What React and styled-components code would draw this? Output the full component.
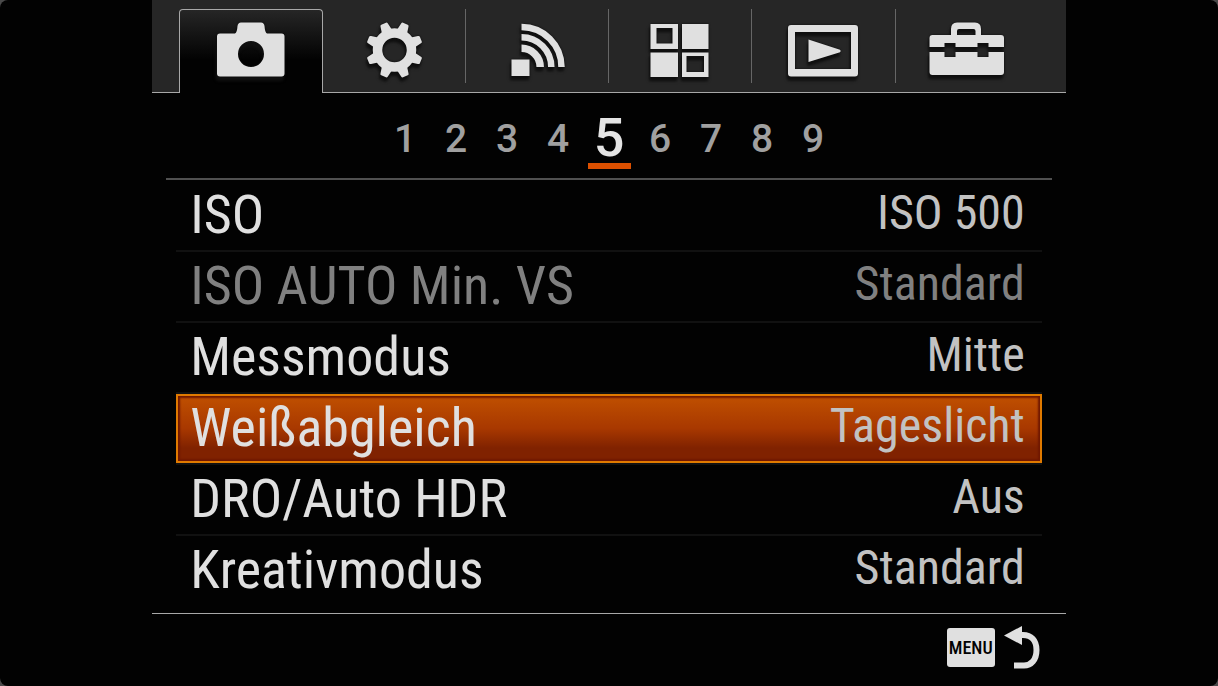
import React, { useState } from "react";
import styled, { createGlobalStyle, css } from "styled-components";

const GlobalStyle = createGlobalStyle`
  * {
    box-sizing: border-box;
  }
  body {
    margin: 0;
    background-color: #4a4a4a;
  }
  button {
    margin: 0;
    padding: 0;
    border: 0;
    background: none;
    color: inherit;
    font: inherit;
    cursor: pointer;
  }
`;

const Screen = styled.main`
  min-height: 100vh;
  background-color: #020202;
  border-radius: 8px;
  font-family: "Roboto Condensed", "Liberation Sans", sans-serif;
  color: #e0e0e0;
`;

const Menu = styled.div`
  width: 75%;
  margin: 0 auto;
`;

const TabBar = styled.nav`
  display: grid;
  grid-template-columns: repeat(6, 1fr);
  padding: 9px 27px 0;
  background-color: #262626;
  border-bottom: 1px solid #a8a8a8;
`;

const Tab = styled.button`
  display: flex;
  align-items: center;
  justify-content: center;
  height: 74px;
  border-right: 1px solid #666;
  &:last-child {
    border-right: 0;
    padding-right: 2px;
  }
  ${(props) =>
    props.$active &&
    css`
      height: 84px;
      margin-bottom: -1px;
      padding-bottom: 12px;
      border: 1px solid #a8a8a8;
      border-bottom: 0;
      border-radius: 4px 4px 0 0;
      background: linear-gradient(#262626, #020202 60%);
    `}
`;

const TabIcon = styled.svg`
  width: 80px;
  height: 60px;
  margin-top: 10px;
  overflow: visible;
  filter: drop-shadow(0 0 1px #0c0c0c) drop-shadow(-1px 4px 1px #101010);
`;

const Pages = styled.nav`
  display: flex;
  justify-content: center;
  height: 87px;
  margin: 0 14px;
  padding-top: 20px;
  border-bottom: 2px solid #505050;
  font-family: Roboto, "Liberation Sans", sans-serif;
  font-weight: 500;
`;

const Page = styled.button`
  width: 43px;
  height: 56px;
  margin: 0 4px;
  padding-bottom: 4px;
  font-size: 39px;
  line-height: 48px;
  color: #a0a0a0;
  ${(props) =>
    props.$active &&
    css`
      padding-bottom: 0;
      color: #e4e4e4;
      font-size: 54px;
      border-bottom: 6px solid #dc5000;
    `}
`;

const List = styled.ul`
  list-style: none;
  margin: 0 24px;
  padding: 1px 0 8px;
`;

const Item = styled.li`
  border-bottom: 2px solid #111;
  &:last-child {
    border-bottom: 0;
  }
`;

const Row = styled.button`
  display: flex;
  justify-content: space-between;
  width: 100%;
  height: 69px;
  padding: 0 15px 0 12px;
  border: 2px solid transparent;
  color: ${(props) => (props.disabled ? "#808080" : "#e0e0e0")};
  ${(props) =>
    props.$selected &&
    css`
      border-color: #e07a00;
      background: linear-gradient(#c05000, #a83800 50%, #802200 80%);
      box-shadow: inset 0 0 2px 2px #701800;
    `}
`;

const Label = styled.span`
  font-size: 54px;
  line-height: 64px;
`;

const Value = styled.span`
  font-size: 48px;
  line-height: 60px;
  color: ${(props) => (props.$dim ? "#808080" : "#c2c2c2")};
`;

const Footer = styled.footer`
  display: flex;
  justify-content: flex-end;
  padding: 12px 26px 16px;
  border-top: 1px solid #a8a8a8;
`;

const Back = styled.button`
  display: flex;
  align-items: center;
  gap: 9px;
`;

const MenuKey = styled.span`
  width: 48px;
  height: 39px;
  border-radius: 3px;
  background-color: #e0e0e0;
  color: #020202;
  font-size: 18px;
  font-weight: 500;
  line-height: 40px;
  text-align: center;
`;

const tabs = [
  {
    name: "Kamera",
    icon: (
      <path
        fillRule="evenodd"
        d="M9 12.500H24Q26 12 26.500 5Q27 1.500 30 1.500H50Q53 1.500 53.500 5Q54 12 56 12.500H70.500Q73.500 12.500 73.500 15.500V52.500Q73.500 55.500 70.500 55.500H9Q6 55.500 6 52.500V15.500Q6 12.500 9 12.500ZM40 20A13 13 0 1 0 40 46A13 13 0 1 0 40 20Z"
      />
    ),
  },
  {
    name: "Benutzereinstellungen",
    icon: (
      <g transform="translate(40.5 29)">
        <circle r="17" fill="none" stroke="#e0e0e0" strokeWidth="9.500" />
        {[0, 1, 2, 3, 4, 5, 6, 7].map((n) => (
          <path
            key={n}
            transform={`rotate(${22.5 + n * 45})`}
            d="M-5.500 -19L-4 -27Q-3.800 -28.500 -2.500 -28.500H2.500Q3.800 -28.500 4 -27L5.500 -19Z"
          />
        ))}
      </g>
    ),
  },
  {
    name: "Drahtlos",
    icon: (
      <g>
        <rect x="14.500" y="38.500" width="18" height="16.500" />
        <g fill="none" stroke="#e0e0e0">
          <path strokeWidth="7.500" d="M24.500 27.300A18.700 18.700 0 0 1 43.200 46" />
          <path strokeWidth="6.500" d="M24.500 16.200A29.800 29.800 0 0 1 54.300 46" />
          <path strokeWidth="6.500" d="M24.500 6A40 40 0 0 1 64.500 46" />
        </g>
      </g>
    ),
  },
  {
    name: "Applikation",
    icon: (
      <path
        fillRule="evenodd"
        d="M10.500 3H38V28H10.500ZM16.500 7V22.500H32.500V7ZM42 3H68.500V28H42ZM10.500 31.500H38V56H10.500ZM42 31.500H68.500V56H42ZM46.500 35V51H64V35Z"
      />
    ),
  },
  {
    name: "Wiedergabe",
    icon: (
      <path
        fillRule="evenodd"
        d="M8 4H72Q75 4 75 7V52.500Q75 55.500 72 55.500H8Q5 55.500 5 52.500V7Q5 4 8 4ZM12 11V48H68V11ZM25.500 18.500L57 28.800Q58.500 30 57 31.200L25.500 41Z"
      />
    ),
  },
  {
    name: "Einstellung",
    icon: (
      <g>
        <path
          fillRule="evenodd"
          d="M25 14V8Q25 1.500 31 1.500H49Q55 1.500 55 8V14H75Q78 14 78 17V26H62.500V22H51.500V26H29.500V22H18.500V26H3.500V17Q3.500 14 6.500 14ZM31 14H49.500V10Q49.500 8 47.500 8H33Q31 8 31 10Z"
        />
        <path d="M3.500 31H18.500V36H29.500V31H51.500V36H62.500V31H78V51Q78 54 75 54H6.500Q3.500 54 3.500 51Z" />
      </g>
    ),
  },
];

const settings = [
  { label: "ISO", value: "ISO 500" },
  { label: "ISO AUTO Min. VS", value: "Standard", disabled: true },
  { label: "Messmodus", value: "Mitte" },
  { label: "Weißabgleich", value: "Tageslicht" },
  { label: "DRO/Auto HDR", value: "Aus" },
  { label: "Kreativmodus", value: "Standard" },
];

function App() {
  const [tab, setTab] = useState(0);
  const [page, setPage] = useState(5);
  const [selected, setSelected] = useState("Weißabgleich");

  return (
    <Screen>
      <GlobalStyle />
      <Menu>
        <TabBar>
          {tabs.map((item, index) => (
            <Tab
              key={item.name}
              aria-label={item.name}
              $active={index === tab}
              onClick={() => setTab(index)}
            >
              <TabIcon viewBox="0 0 80 60" fill="#e0e0e0">
                {item.icon}
              </TabIcon>
            </Tab>
          ))}
        </TabBar>
        <Pages>
          {[1, 2, 3, 4, 5, 6, 7, 8, 9].map((n) => (
            <Page key={n} $active={n === page} onClick={() => setPage(n)}>
              {n}
            </Page>
          ))}
        </Pages>
        <List>
          {settings.map((item) => (
            <Item key={item.label}>
              <Row
                disabled={item.disabled}
                $selected={item.label === selected}
                onClick={() => setSelected(item.label)}
              >
                <Label>{item.label}</Label>
                <Value $dim={item.disabled}>{item.value}</Value>
              </Row>
            </Item>
          ))}
        </List>
        <Footer>
          <Back>
            <MenuKey>MENU</MenuKey>
            <svg width="36" height="43" viewBox="0 0 36 43" aria-hidden="true">
              <path fill="#e0e0e0" d="M0 9.500L18 0V19Z" />
              <path
                fill="none"
                stroke="#e0e0e0"
                strokeWidth="6"
                d="M14 9H19C27 9 32.500 14 32.500 24C32.500 34 27 39.500 20 39.500H10"
              />
            </svg>
          </Back>
        </Footer>
      </Menu>
    </Screen>
  );
}

export default App;
